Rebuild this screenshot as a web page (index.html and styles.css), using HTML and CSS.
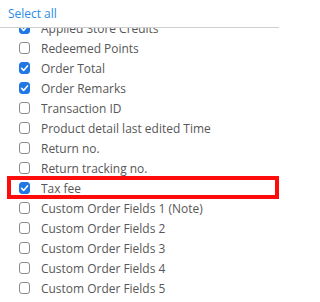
FILE: index.html
```html
<!DOCTYPE html>
<html>
<head>
<meta charset="utf-8">
<link rel="stylesheet" href="styles.css">
</head>
<body>
<div class="panel">
  <div class="header"><a class="select-all">Select all</a></div>
  <div class="viewport">
    <ul class="list">
      <li class="row"><span class="box checked"><svg viewBox="0 0 11 12"><path d="M2.6 6.3 L4.6 8.4 L8.5 3.9"/></svg></span><span class="label">Applied Store Credits</span></li>
      <li class="row"><span class="box"></span><span class="label">Redeemed Points</span></li>
      <li class="row"><span class="box checked"><svg viewBox="0 0 11 12"><path d="M2.6 6.3 L4.6 8.4 L8.5 3.9"/></svg></span><span class="label">Order Total</span></li>
      <li class="row"><span class="box checked"><svg viewBox="0 0 11 12"><path d="M2.6 6.3 L4.6 8.4 L8.5 3.9"/></svg></span><span class="label">Order Remarks</span></li>
      <li class="row"><span class="box"></span><span class="label">Transaction ID</span></li>
      <li class="row"><span class="box"></span><span class="label">Product detail last edited Time</span></li>
      <li class="row"><span class="box"></span><span class="label">Return no.</span></li>
      <li class="row"><span class="box"></span><span class="label">Return tracking no.</span></li>
      <li class="row marked"><span class="box checked"><svg viewBox="0 0 11 12"><path d="M2.6 6.3 L4.6 8.4 L8.5 3.9"/></svg></span><span class="label">Tax fee</span><span class="highlight"></span></li>
      <li class="row"><span class="box"></span><span class="label">Custom Order Fields 1 (Note)</span></li>
      <li class="row"><span class="box"></span><span class="label">Custom Order Fields 2</span></li>
      <li class="row"><span class="box"></span><span class="label">Custom Order Fields 3</span></li>
      <li class="row"><span class="box"></span><span class="label">Custom Order Fields 4</span></li>
      <li class="row"><span class="box"></span><span class="label">Custom Order Fields 5</span></li>
    </ul>
  </div>
</div>
</body>
</html>
```
FILE: styles.css
```css
html, body {
  margin: 0;
  padding: 0;
  background: #ffffff;
}
body {
  font-family: "Open Sans", "Liberation Sans", sans-serif;
  width: 279px;
  height: 302px;
  overflow: hidden;
}
.panel {
  display: flex;
  flex-direction: column;
  height: 302px;
}
.header {
  height: 27px;
  border-bottom: 1px solid #cfcfcf;
  padding-left: 8px;
  display: flex;
  align-items: center;
}
.select-all {
  display: inline-block;
  color: #2a8be6;
  font-size: 13px;
  line-height: 20px;
  margin-top: -1px;
  transform: scaleX(0.92);
  transform-origin: left center;
  cursor: pointer;
}
.viewport {
  flex: 1;
  overflow: hidden;
}
.list {
  list-style: none;
  margin: -10px 0 0 0;
  padding: 0;
}
.row {
  height: 20px;
  display: flex;
  align-items: center;
  padding-left: 19px;
  gap: 11px;
  font-size: 13px;
  color: #575757;
  white-space: nowrap;
}
.marked {
  position: relative;
}
.box {
  width: 11px;
  height: 12px;
  box-sizing: border-box;
  border: 1px solid #8c8c8c;
  border-radius: 3px;
  background: #ffffff;
  flex: none;
  display: flex;
}
.box.checked {
  border-color: #2177e4;
  background: #2177e4;
}
.box svg {
  width: 11px;
  height: 12px;
  margin: -1px;
  fill: none;
  stroke: #ffffff;
  stroke-width: 1.6;
  stroke-linecap: round;
  stroke-linejoin: round;
}
.label {
  display: inline-block;
  line-height: 20px;
  transform: scaleX(0.92);
  transform-origin: left center;
}
.highlight {
  position: absolute;
  left: 7px;
  right: 0;
  top: -2px;
  bottom: -1px;
  border: 4px solid #fe0c0c;
  pointer-events: none;
}
```
